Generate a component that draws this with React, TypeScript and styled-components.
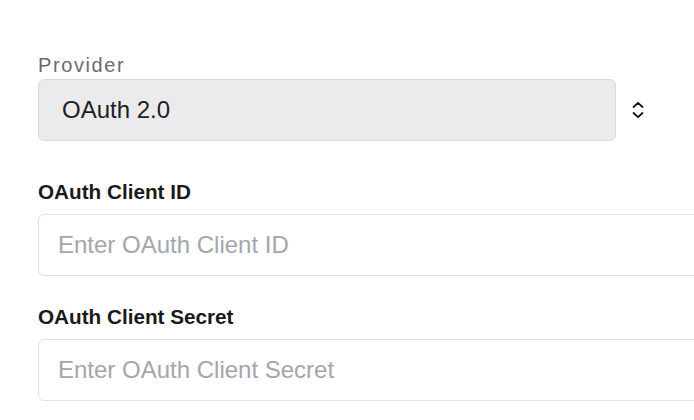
import React from "react";
import styled, { createGlobalStyle } from "styled-components";

const Global = createGlobalStyle`
  html, body { margin: 0; padding: 0; background: #fff; overflow: hidden; }
  body { font-family: "Liberation Sans", Arial, sans-serif; }
`;

const Page = styled.div`
  width: 694px;
  height: 420px;
  overflow: hidden;
  padding: 53px 0 0 38px;
  box-sizing: border-box;
  display: flex;
  flex-direction: column;
`;

const Field = styled.div<{ $gapAfter: number }>`
  display: flex;
  flex-direction: column;
  margin-bottom: ${(p) => p.$gapAfter}px;
`;

const SoftLabel = styled.label`
  font-size: 20px;
  line-height: 24px;
  letter-spacing: 1.6px;
  color: #6a6a6a;
  margin-bottom: 2px;
`;

const StrongLabel = styled.label`
  font-size: 20.7px;
  line-height: 24px;
  font-weight: 700;
  color: #1a1a1a;
  margin-bottom: 10px;
`;

const SelectRow = styled.div`
  display: flex;
  align-items: center;
  gap: 16px;
`;

const SelectBox = styled.div`
  width: 578px;
  height: 62px;
  box-sizing: border-box;
  border: 1px solid #dadadc;
  border-radius: 6px;
  background: #ebebed;
  display: flex;
  align-items: center;
  padding-left: 23px;
  font-size: 24px;
  color: #1e1e1e;
`;

const Chevron = styled.svg`
  width: 12px;
  height: 18px;
  flex: none;
`;

const TextInput = styled.input`
  width: 700px;
  height: 62px;
  box-sizing: border-box;
  border: 1px solid #e2e2e4;
  border-radius: 6px;
  background: #fff;
  padding: 0 0 0 19px;
  font-family: "Liberation Sans", Arial, sans-serif;
  font-size: 24px;
  color: #1e1e1e;
  outline: none;
  &::placeholder { color: #a3a6ab; }
`;

export default function App() {
  return (
    <>
      <Global />
      <Page>
        <Field $gapAfter={39}>
          <SoftLabel>Provider</SoftLabel>
          <SelectRow>
            <SelectBox>OAuth 2.0</SelectBox>
            <Chevron viewBox="0 0 12 18" fill="none" stroke="#111" strokeWidth="1.8" strokeLinecap="round" strokeLinejoin="round">
              <path d="M1.5 6 L6 1.8 L10.5 6" />
              <path d="M1.5 12 L6 16.2 L10.5 12" />
            </Chevron>
          </SelectRow>
        </Field>
        <Field $gapAfter={29}>
          <StrongLabel>OAuth Client ID</StrongLabel>
          <TextInput placeholder="Enter OAuth Client ID" />
        </Field>
        <Field $gapAfter={0}>
          <StrongLabel>OAuth Client Secret</StrongLabel>
          <TextInput placeholder="Enter OAuth Client Secret" />
        </Field>
      </Page>
    </>
  );
}
